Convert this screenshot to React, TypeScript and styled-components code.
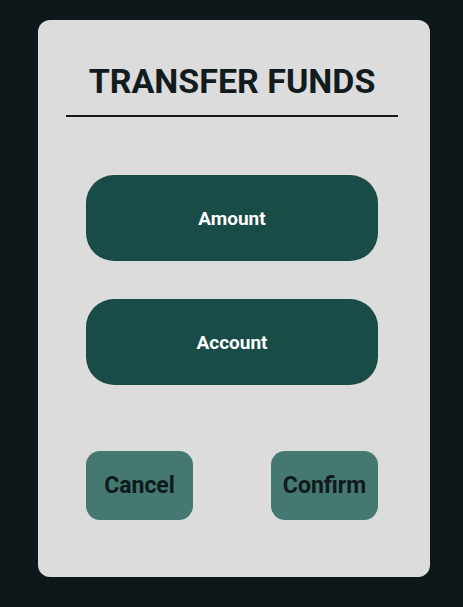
import styled, { createGlobalStyle } from "styled-components";

const GlobalStyle = createGlobalStyle`
  html, body {
    margin: 0;
    padding: 0;
    background-color: #0e1719;
    font-family: Roboto, "Liberation Sans", sans-serif;
  }
`;

const Page = styled.div`
  width: 463px;
  height: 607px;
  padding-top: 20px;
  padding-left: 38px;
  box-sizing: border-box;
`;

const Card = styled.div`
  width: 392px;
  height: 557px;
  box-sizing: border-box;
  padding: 41px 32px 0 28px;
  background-color: #dcdcdc;
  border-radius: 12px;
  display: flex;
  flex-direction: column;
`;

const Title = styled.h1`
  margin: 0 0 14px;
  font-size: 34px;
  line-height: 40px;
  font-weight: 700;
  color: #121b1e;
  text-align: center;
`;

const Divider = styled.div`
  height: 2px;
  background-color: #15191a;
  margin-bottom: 58px;
`;

const Fields = styled.div`
  display: flex;
  flex-direction: column;
  gap: 38px;
  margin: 0 20px;
`;

const Field = styled.button`
  height: 86px;
  border: none;
  border-radius: 28px;
  background-color: #1a4c47;
  color: #ffffff;
  font-family: inherit;
  font-size: 19px;
  font-weight: 700;
  cursor: pointer;
`;

const Actions = styled.div`
  display: flex;
  justify-content: space-between;
  margin: 66px 20px 0;
`;

const ActionButton = styled.button`
  width: 107px;
  height: 69px;
  border: none;
  border-radius: 14px;
  background-color: #457870;
  color: #0f1a1c;
  font-family: inherit;
  font-size: 23px;
  font-weight: 700;
  cursor: pointer;
`;

function App() {
  return (
    <>
      <GlobalStyle />
      <Page>
        <Card>
          <Title>TRANSFER FUNDS</Title>
          <Divider />
          <Fields>
            <Field>Amount</Field>
            <Field>Account</Field>
          </Fields>
          <Actions>
            <ActionButton>Cancel</ActionButton>
            <ActionButton>Confirm</ActionButton>
          </Actions>
        </Card>
      </Page>
    </>
  );
}

export default App;
